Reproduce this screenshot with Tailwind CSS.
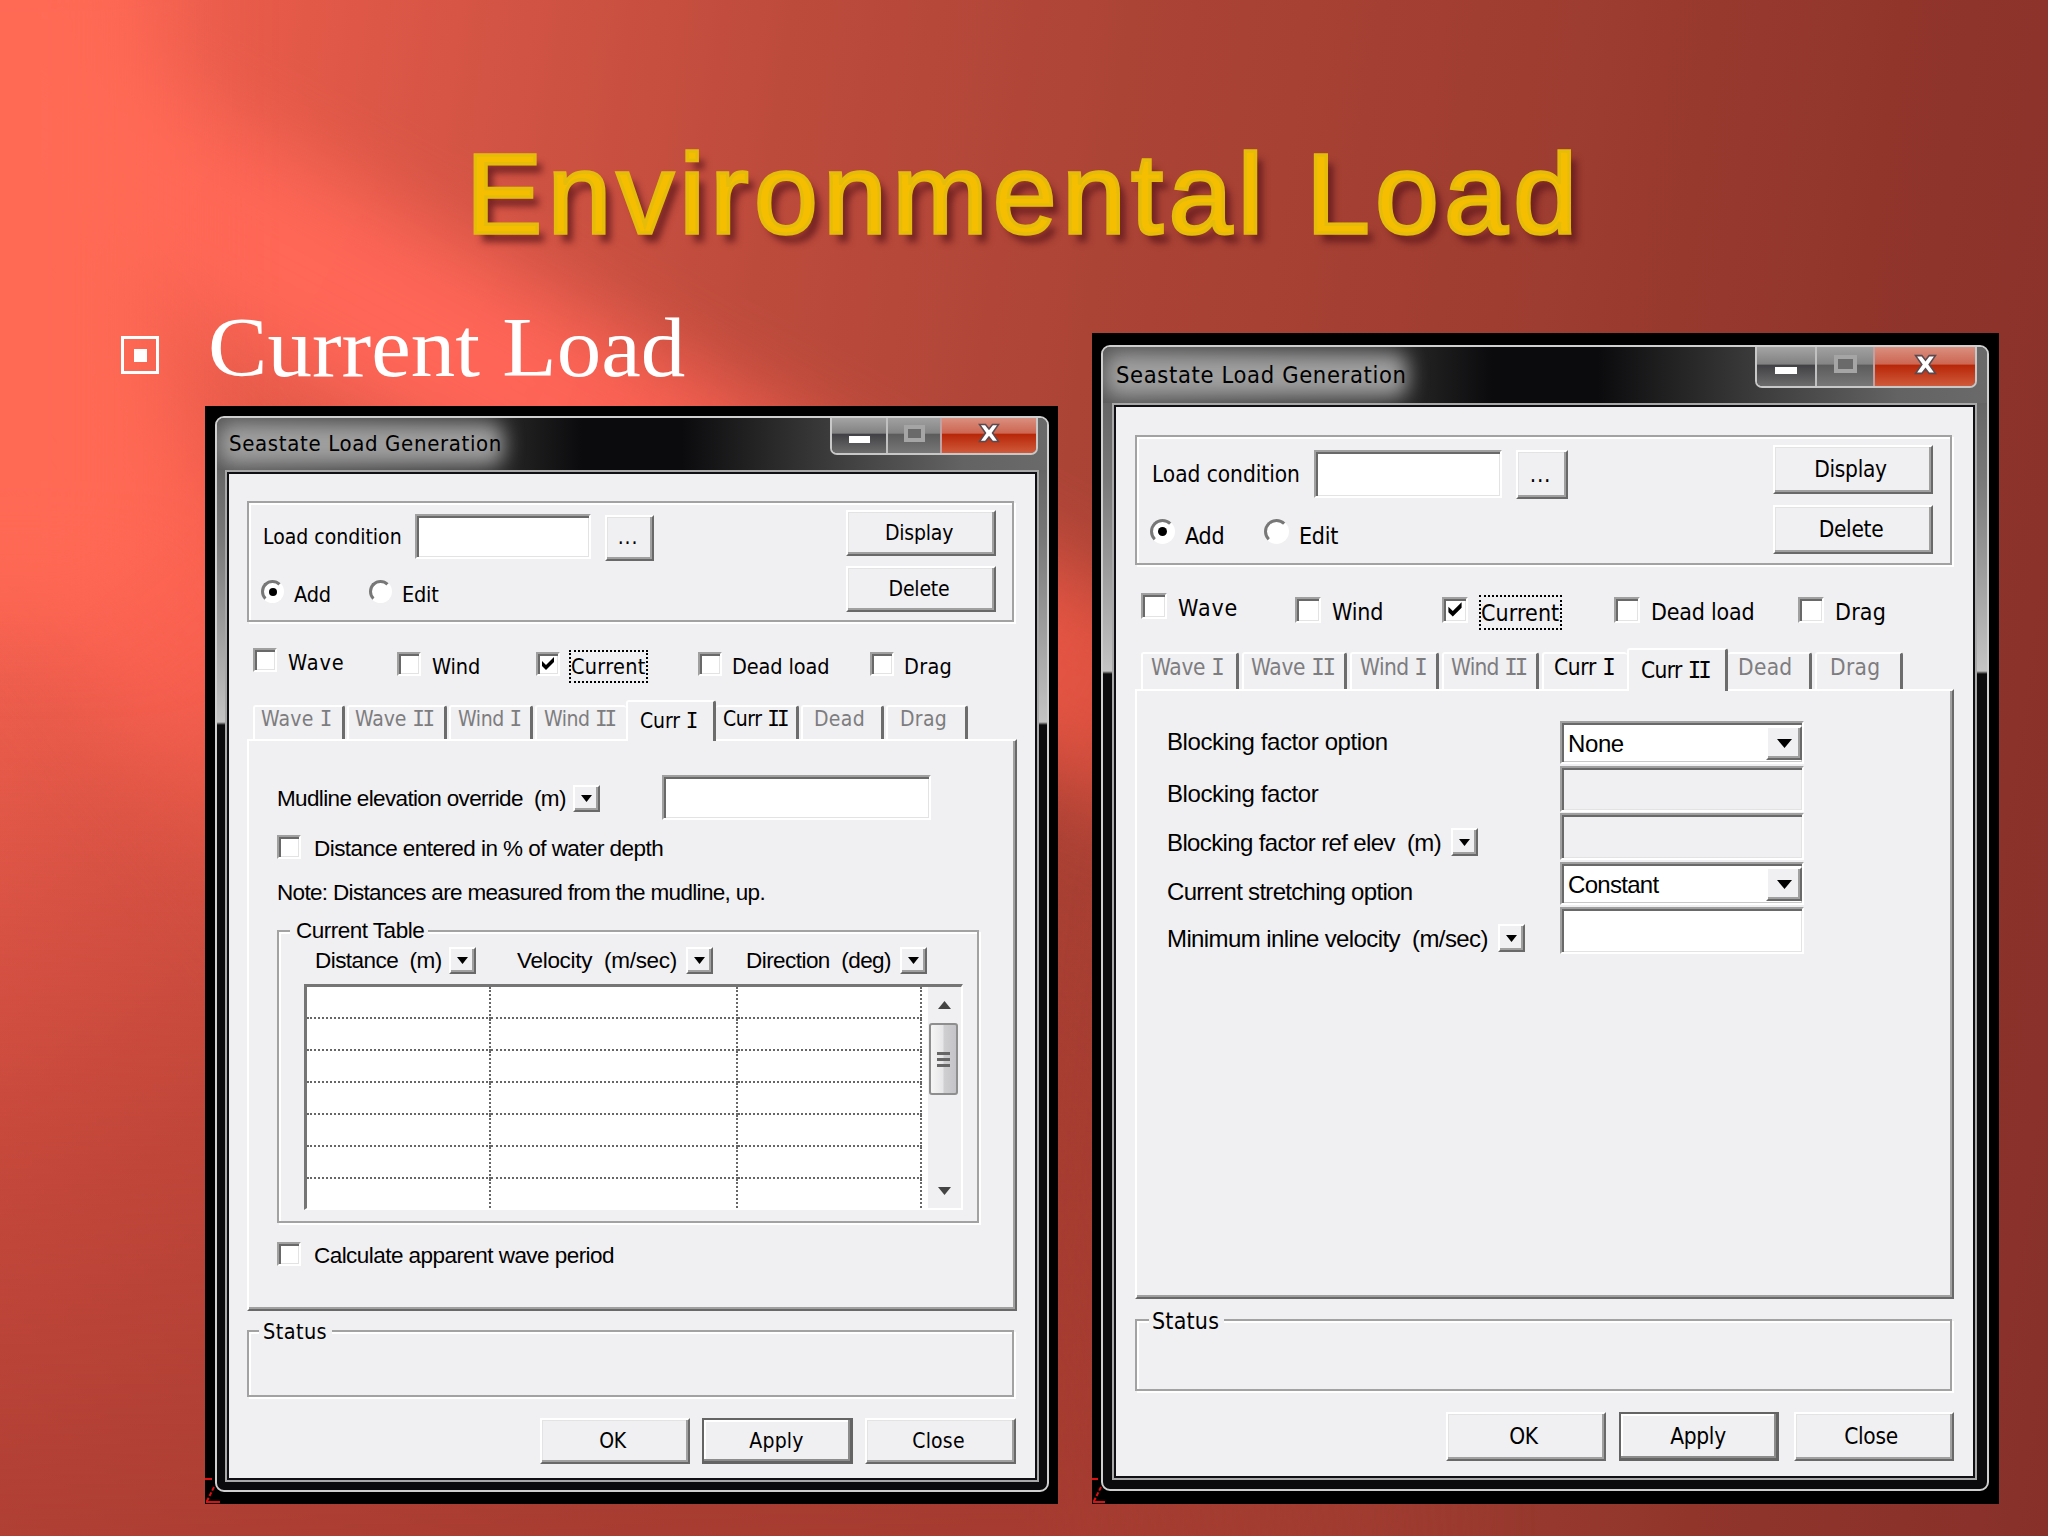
<!DOCTYPE html>
<html lang="en">
<head>
    <meta charset="UTF-8">
    <meta name="viewport" content="width=device-width, initial-scale=1.0">
    <title>Environmental Load</title>
    <script src="https://cdn.jsdelivr.net/npm/@tailwindcss/browser@4"></script>
</head>
<body class="relative w-[2048px] h-[1536px] overflow-hidden bg-[#a03a30] font-['DejaVu_Sans_Condensed','DejaVu_Sans',sans-serif] text-black whitespace-nowrap">

    <!-- Background rays -->
    <div class="absolute inset-0 bg-[linear-gradient(98deg,#f96452_0%,#e65a49_12%,#d35444_22%,#bd4b3c_35%,#ac4436_50%,#9f3d31_68%,#91352b_84%,#87302a_100%)]"></div>
    <div class="absolute inset-0 bg-[linear-gradient(to_bottom,transparent_40%,rgba(165,55,46,0.55)_75%,rgba(165,58,48,0.85)_100%)] [mask-image:linear-gradient(to_right,#000_50%,transparent_75%)]"></div>
    <div class="absolute -left-[250px] top-[335px] w-[1700px] h-[190px] rotate-[28deg] blur-[40px] bg-[linear-gradient(to_right,#ff6a55_0%,#ff6557_45%,rgba(230,84,66,0.95)_82%,transparent_100%)]"></div>
    <div class="absolute -left-[330px] top-[480px] w-[1000px] h-[240px] rotate-[52deg] blur-[50px] bg-[linear-gradient(to_right,#ff6a55_0%,#fb6150_55%,rgba(215,80,64,0.6)_80%,transparent_100%)]"></div>
    <div class="absolute -left-[200px] -top-[100px] w-[360px] h-[700px] blur-[50px] bg-[#ff6a55]/90"></div>

    <!-- Slide heading -->
    <h1 class="absolute left-[466px] top-[127px] font-['Liberation_Sans',sans-serif] font-normal text-[114px] leading-[133px] tracking-[5.7px] text-[#f6be00] [-webkit-text-stroke:3.5px_#e6bc0a] [text-shadow:-1px_-1px_1px_#a9a41c,1px_1px_1px_#b8a00c,7px_9px_7px_rgba(90,20,25,0.75)]">Environmental Load</h1>
    <div class="absolute left-[121px] top-[300px] flex">
        <div class="mt-[36px] w-[38px] h-[38px] border-[3px] border-white flex items-center justify-center">
            <div class="w-[13px] h-[13px] bg-white"></div>
        </div>
        <h2 class="ml-[49px] origin-left scale-x-[1.06] font-['Liberation_Serif',serif] text-[84px] leading-[96px] text-white">Current Load</h2>
    </div>

    <!-- Left window: Curr I -->
    <div class="absolute left-[205px] top-[406px] w-[853px] h-[1098px] bg-black pl-[10px] pt-[10px]">
        <svg class="absolute left-0 bottom-0 w-[16px] h-[28px]" viewBox="0 0 16 28" fill="none" stroke="#e01010" stroke-width="2"><path d="M0 3h7M1 26h14"/><path d="M9 11L1 27" stroke-dasharray="4 2"/></svg>
        <div class="relative w-[834px] h-[1076px] rounded-[9px] border-2 border-[#cfcfcf] overflow-hidden bg-[linear-gradient(to_bottom,#4c4c4c_0px,#666_55px,#777_120px,#c4c4c4_304px,#0b0b0d_307px)]">
            <div class="relative h-[52px] overflow-hidden bg-[linear-gradient(to_right,#555_0%,#333_30%,#0b0b0d_44%,#0b0b0d_56%,#3c3c3c_74%,#636363_90%,#6a6a6a_100%)]">
                <div class="absolute left-[2px] top-[5px] w-[284px] h-[42px] rounded-[12px] bg-[#a0a0a0] blur-[10px]"></div>
                <p class="relative pl-[12px] pt-[14px] text-[22px] leading-[24px] tracking-[0.65px]">Seastate Load Generation</p>
                <div class="absolute right-[9px] -top-[2px] w-[208px] h-[39px] flex rounded-b-[7px] border-2 border-t-0 border-[#c8c8c8] overflow-hidden">
                    <div class="w-[56px] flex items-center justify-center border-r-2 border-[#c0c0c0] bg-[linear-gradient(to_bottom,#a8a8a8_0%,#828282_46%,#424246_50%,#6c6c6c_100%)]"><div class="mt-[9px] w-[21px] h-[7px] bg-white"></div></div>
                    <div class="w-[54px] flex items-center justify-center border-r-2 border-[#c0a0a0] bg-[linear-gradient(to_bottom,#a4a4a4_0%,#858585_46%,#5c5c5c_50%,#777_100%)]"><div class="w-[21px] h-[17px] -mt-[3px] border-4 border-[#a5a5a5] bg-[#6a6a6a]"></div></div>
                    <div class="flex-1 flex items-center justify-center bg-[linear-gradient(to_bottom,#dc9484_0%,#cc6753_46%,#b82708_50%,#cf5a3c_100%)]">
                        <svg class="w-[22px] h-[20px] -mt-[3px]" viewBox="0 0 22 20"><path d="M1.500 1.500h6L11 6l3.500-4.500h6L14.500 10l6 8.500h-6L11 14l-3.500 4.500h-6l6-8.500z" fill="#fff" stroke="#5a4a50" stroke-width="1.500"/></svg>
                    </div>
                </div>
            </div>
            <div class="ml-[8px] w-[814px] h-[1012px] border-2 border-[#a8a8a8]">
                <div class="h-full border-2 border-[#101014] bg-[#f0eff1]">

                    <!-- Load condition -->
                    <div class="ml-[18px] mt-[27px] w-[767px] h-[121px] border-2 border-[#a2a2a2] shadow-[inset_2px_2px_0_#fff,2px_2px_0_#fff] flex justify-between">
                        <div>
                            <div class="flex items-start h-[70px] pl-[14px]">
                                <p class="w-[152px] mt-[22px] text-[21px] leading-[24px]">Load condition</p>
                                <div class="mt-[11px] w-[176px] h-[45px] bg-white border-2 border-t-[#a0a0a0] border-l-[#a0a0a0] border-r-[#fff] border-b-[#fff] shadow-[inset_2px_2px_0_#696969,inset_-1px_-1px_0_#e3e3e3]"></div>
                                <button class="ml-[14px] mt-[12px] w-[49px] h-[46px] pr-[3px] border-2 border-t-white border-l-white border-r-[#696969] border-b-[#696969] shadow-[inset_-2px_-2px_0_#a0a0a0,inset_1px_1px_0_#e3e3e3] text-[21px] tracking-[0.8px]">...</button>
                            </div>
                            <div class="flex items-start pl-[12px] text-[21.5px] leading-[24px] tracking-[-0.2px]">
                                <div class="mt-[7px] w-[23px] h-[23px] rounded-full bg-white border-[3px] border-t-[#777] border-l-[#777] border-r-[#fff] border-b-[#fff] flex items-center justify-center"><div class="w-[8px] h-[8px] rounded-full bg-black"></div></div>
                                <p class="w-[75px] ml-[10px] mt-[10px]">Add</p>
                                <div class="mt-[7px] w-[23px] h-[23px] rounded-full bg-white border-[3px] border-t-[#777] border-l-[#777] border-r-[#fff] border-b-[#fff]"></div>
                                <p class="ml-[10px] mt-[10px]">Edit</p>
                            </div>
                        </div>
                        <div class="mt-[7px] mr-[16px] flex flex-col gap-[10px] text-[21px] leading-[24px] tracking-[-0.2px]">
                            <button class="w-[150px] h-[46px] pb-[1px] pr-[4px] border-2 border-t-white border-l-white border-r-[#696969] border-b-[#696969] shadow-[inset_-2px_-2px_0_#a0a0a0,inset_1px_1px_0_#e3e3e3]">Display</button>
                            <button class="w-[150px] h-[46px] pb-[1px] pr-[4px] border-2 border-t-white border-l-white border-r-[#696969] border-b-[#696969] shadow-[inset_-2px_-2px_0_#a0a0a0,inset_1px_1px_0_#e3e3e3]">Delete</button>
                        </div>
                    </div>

                    <!-- Load types -->
                    <div class="h-[78px] pl-[24px] grid grid-cols-[144px_139px_162px_172px_auto] items-start text-[21.5px] leading-[24px] tracking-[-0.1px]">
                        <div class="flex items-start"><div class="mt-[26px] w-[24px] h-[24px] bg-white border-2 border-t-[#a0a0a0] border-l-[#a0a0a0] border-r-[#fff] border-b-[#fff] shadow-[inset_2px_2px_0_#696969,inset_-1px_-1px_0_#e3e3e3]"></div><p class="ml-[11px] mt-[29px] tracking-[0.9px]">Wave</p></div>
                        <div class="flex items-start"><div class="mt-[30px] w-[24px] h-[24px] bg-white border-2 border-t-[#a0a0a0] border-l-[#a0a0a0] border-r-[#fff] border-b-[#fff] shadow-[inset_2px_2px_0_#696969,inset_-1px_-1px_0_#e3e3e3]"></div><p class="ml-[11px] mt-[33px]">Wind</p></div>
                        <div class="flex items-start">
                            <div class="mt-[30px] w-[24px] h-[24px] bg-white border-2 border-t-[#a0a0a0] border-l-[#a0a0a0] border-r-[#fff] border-b-[#fff] shadow-[inset_2px_2px_0_#696969,inset_-1px_-1px_0_#e3e3e3]"><svg class="w-[20px] h-[20px]" viewBox="0 0 20 20"><path d="M4 7v5l4 4 8-8V3l-8 8z" fill="#000"/></svg></div>
                            <p class="ml-[9px] mt-[28px] w-[79px] h-[33px] border-2 border-dotted border-black pt-[3px] tracking-[0.3px]">Current</p>
                        </div>
                        <div class="flex items-start"><div class="mt-[30px] w-[24px] h-[24px] bg-white border-2 border-t-[#a0a0a0] border-l-[#a0a0a0] border-r-[#fff] border-b-[#fff] shadow-[inset_2px_2px_0_#696969,inset_-1px_-1px_0_#e3e3e3]"></div><p class="ml-[10px] mt-[33px]">Dead load</p></div>
                        <div class="flex items-start"><div class="mt-[30px] w-[24px] h-[24px] bg-white border-2 border-t-[#a0a0a0] border-l-[#a0a0a0] border-r-[#fff] border-b-[#fff] shadow-[inset_2px_2px_0_#696969,inset_-1px_-1px_0_#e3e3e3]"></div><p class="ml-[10px] mt-[33px] tracking-[0.3px]">Drag</p></div>
                    </div>

                    <!-- Tabs -->
                    <div class="flex items-end h-[39px] pl-[24px] text-[21px] leading-[24px] tracking-[-0.1px] text-[#7d7d80]">
                        <div class="w-[92px] h-[34px] mr-[2px] pl-[6px] rounded-t-[3px] border-t-2 border-l-2 border-r-[3px] border-t-white border-l-white border-r-[#6c6c6c] tracking-[0.2px]">Wave <span class="font-['DejaVu_Sans_Mono']">I</span></div>
                        <div class="w-[100px] h-[34px] mr-[2px] pl-[6px] rounded-t-[3px] border-t-2 border-l-2 border-r-[3px] border-t-white border-l-white border-r-[#6c6c6c]">Wave <span class="font-['DejaVu_Sans_Mono'] tracking-[-2.5px]">II</span></div>
                        <div class="w-[84px] h-[34px] mr-[2px] pl-[7px] rounded-t-[3px] border-t-2 border-l-2 border-r-[3px] border-t-white border-l-white border-r-[#6c6c6c] tracking-[-0.4px]">Wind <span class="font-['DejaVu_Sans_Mono']">I</span></div>
                        <div class="w-[91px] h-[34px] pl-[7px] rounded-t-[3px] border-t-2 border-l-2 border-t-white border-l-white tracking-[-0.5px]">Wind <span class="font-['DejaVu_Sans_Mono'] tracking-[-3px]">II</span></div>
                        <div class="relative z-10 w-[90px] h-[41px] -mb-[2px] pl-[12px] pt-[7px] rounded-t-[3px] border-t-2 border-l-2 border-r-[3px] border-t-white border-l-white border-r-[#6c6c6c] bg-[#f0eff1] text-black">Curr <span class="font-['DejaVu_Sans_Mono']">I</span></div>
                        <div class="w-[83px] h-[34px] mr-[2px] pl-[7px] rounded-t-[3px] border-t-2 border-r-[3px] border-t-white border-r-[#6c6c6c] text-black tracking-[-0.4px]">Curr <span class="font-['DejaVu_Sans_Mono'] tracking-[-3px]">II</span></div>
                        <div class="w-[83px] h-[34px] mr-[2px] pl-[11px] rounded-t-[3px] border-t-2 border-l-2 border-r-[3px] border-t-white border-l-white border-r-[#6c6c6c] tracking-[0.3px]">Dead</div>
                        <div class="w-[82px] h-[34px] pl-[12px] rounded-t-[3px] border-t-2 border-l-2 border-r-[3px] border-t-white border-l-white border-r-[#6c6c6c] tracking-[0.3px]">Drag</div>
                    </div>
                    <div class="ml-[18px] w-[770px] h-[572px] border-2 border-t-white border-l-white border-r-[#696969] border-b-[#696969] shadow-[inset_-2px_-2px_0_#a0a0a0] font-['Liberation_Sans',sans-serif] text-[22.5px] leading-[24px] tracking-[-0.55px]">
                        <div class="flex items-start h-[84px] pl-[28px]">
                            <p class="w-[296px] mt-[46px] tracking-[-0.65px]">Mudline elevation override&nbsp; (m)</p>
                            <button class="mt-[44px] w-[27px] h-[27px] border-2 border-t-white border-l-white border-r-[#696969] border-b-[#696969] shadow-[inset_-2px_-2px_0_#a0a0a0] flex items-center justify-center"><svg class="w-[11px] h-[7px]" viewBox="0 0 11 7"><path d="M0 0h11L5.500 7z"/></svg></button>
                            <div class="ml-[62px] mt-[34px] w-[269px] h-[45px] bg-white border-2 border-t-[#a0a0a0] border-l-[#a0a0a0] border-r-[#fff] border-b-[#fff] shadow-[inset_2px_2px_0_#696969,inset_-1px_-1px_0_#e3e3e3]"></div>
                        </div>
                        <div class="flex items-start h-[45px] pl-[28px]">
                            <div class="mt-[10px] w-[24px] h-[24px] bg-white border-2 border-t-[#a0a0a0] border-l-[#a0a0a0] border-r-[#fff] border-b-[#fff] shadow-[inset_2px_2px_0_#696969,inset_-1px_-1px_0_#e3e3e3]"></div>
                            <p class="ml-[13px] mt-[12px]">Distance entered in % of water depth</p>
                        </div>
                        <p class="mt-[11px] pl-[28px] tracking-[-0.67px]">Note: Distances are measured from the mudline, up.</p>
                        <div class="mt-[25px] ml-[28px] w-[702px] h-[293px] border-2 border-[#a2a2a2] shadow-[inset_2px_2px_0_#fff,2px_2px_0_#fff]">
                            <p class="-mt-[13px] ml-[11px] mb-[1px] w-[138px] pl-[6px] bg-[#f0eff1] tracking-[-0.5px]">Current Table</p>
                            <div class="flex items-start h-[40px] pl-[36px]">
                                <p class="w-[134px] mt-[5px]">Distance&nbsp; (m)</p>
                                <button class="mt-[3px] w-[27px] h-[27px] border-2 border-t-white border-l-white border-r-[#696969] border-b-[#696969] shadow-[inset_-2px_-2px_0_#a0a0a0] flex items-center justify-center"><svg class="w-[11px] h-[7px]" viewBox="0 0 11 7"><path d="M0 0h11L5.500 7z"/></svg></button>
                                <p class="w-[169px] ml-[41px] mt-[5px] tracking-[-0.3px]">Velocity&nbsp; (m/sec)</p>
                                <button class="mt-[3px] w-[27px] h-[27px] border-2 border-t-white border-l-white border-r-[#696969] border-b-[#696969] shadow-[inset_-2px_-2px_0_#a0a0a0] flex items-center justify-center"><svg class="w-[11px] h-[7px]" viewBox="0 0 11 7"><path d="M0 0h11L5.500 7z"/></svg></button>
                                <p class="w-[154px] ml-[33px] mt-[5px]">Direction&nbsp; (deg)</p>
                                <button class="mt-[3px] w-[27px] h-[27px] border-2 border-t-white border-l-white border-r-[#696969] border-b-[#696969] shadow-[inset_-2px_-2px_0_#a0a0a0] flex items-center justify-center"><svg class="w-[11px] h-[7px]" viewBox="0 0 11 7"><path d="M0 0h11L5.500 7z"/></svg></button>
                            </div>
                            <div class="ml-[25px] w-[659px] h-[226px] flex bg-white border-t-[3px] border-l-[3px] border-r-2 border-b-2 border-t-[#757575] border-l-[#757575] border-r-white border-b-white overflow-hidden">
                                <div id="rows" class="w-[615px] overflow-hidden"></div>
                                <div class="ml-[6px] flex-1 bg-[#f0eff1] flex flex-col items-center justify-between pt-[14px] pb-[13px]">
                                    <svg class="w-[13px] h-[8px]" viewBox="0 0 13 8"><path d="M0 8h13L6.500 0z" fill="#444"/></svg>
                                    <div class="-mt-[78px] -ml-[3px] w-[29px] h-[72px] rounded-[3px] border-2 border-[#8e8e8e] bg-[linear-gradient(to_right,#f5f5f5_0%,#e6e6e8_48%,#cfcfd2_52%,#c4c4c8_100%)] flex flex-col items-center justify-center gap-[3px]">
                                        <div class="w-[13px] h-[3px] bg-[#666]"></div>
                                        <div class="w-[13px] h-[3px] bg-[#666]"></div>
                                        <div class="w-[13px] h-[3px] bg-[#666]"></div>
                                    </div>
                                    <svg class="w-[13px] h-[8px]" viewBox="0 0 13 8"><path d="M0 0h13L6.500 8z" fill="#444"/></svg>
                                </div>
                            </div>
                        </div>
                        <div class="flex items-start pl-[28px]">
                            <div class="mt-[19px] w-[24px] h-[24px] bg-white border-2 border-t-[#a0a0a0] border-l-[#a0a0a0] border-r-[#fff] border-b-[#fff] shadow-[inset_2px_2px_0_#696969,inset_-1px_-1px_0_#e3e3e3]"></div>
                            <p class="ml-[13px] mt-[21px]">Calculate apparent wave period</p>
                        </div>
                    </div>

                    <!-- Status -->
                    <div class="ml-[18px] mt-[19px] w-[767px] h-[67px] border-2 border-[#a2a2a2] shadow-[inset_2px_2px_0_#fff,2px_2px_0_#fff]">
                        <p class="-mt-[12px] ml-[10px] w-[73px] pl-[4px] bg-[#f0eff1] text-[21.5px] leading-[24px] tracking-[0.4px]">Status</p>
                    </div>
                    <div class="mt-[21px] pl-[311px] flex gap-[12px] text-[21px] leading-[24px] tracking-[-0.3px]">
                        <button class="w-[150px] h-[46px] pb-px pr-[5px] border-2 border-t-white border-l-white border-r-[#696969] border-b-[#696969] shadow-[inset_-2px_-2px_0_#a0a0a0,inset_1px_1px_0_#e3e3e3]">OK</button>
                        <button class="w-[151px] h-[46px] pr-px border-2 border-b-[3px] border-r-[3px] border-[#646464] shadow-[inset_-2px_-2px_0_#8c8c8c,inset_2px_2px_0_#fff] tracking-[0.2px]">Apply</button>
                        <button class="w-[151px] h-[46px] pb-px pr-[4px] border-2 border-t-white border-l-white border-r-[#696969] border-b-[#696969] shadow-[inset_-2px_-2px_0_#a0a0a0,inset_1px_1px_0_#e3e3e3] tracking-[0.2px]">Close</button>
                    </div>
                </div>
            </div>
        </div>
    </div>

    <!-- Right window: Curr II -->
    <div class="absolute left-[1092px] top-[333px] w-[907px] h-[1171px] bg-black pl-[9px] pt-[12px]">
        <svg class="absolute left-0 bottom-0 w-[16px] h-[28px]" viewBox="0 0 16 28" fill="none" stroke="#e01010" stroke-width="2"><path d="M0 3h6M1 26h12"/><path d="M9 11L1 27" stroke-dasharray="4 2"/></svg>
        <div class="relative w-[888px] h-[1146px] rounded-[9px] border-2 border-[#cfcfcf] overflow-hidden bg-[linear-gradient(to_bottom,#4c4c4c_0px,#666_58px,#777_130px,#c4c4c4_324px,#0b0b0d_327px)]">
            <div class="relative h-[56px] overflow-hidden bg-[linear-gradient(to_right,#555_0%,#333_30%,#0b0b0d_44%,#0b0b0d_56%,#3c3c3c_74%,#636363_90%,#6a6a6a_100%)]">
                <div class="absolute left-[2px] top-[6px] w-[302px] h-[44px] rounded-[12px] bg-[#a0a0a0] blur-[10px]"></div>
                <p class="relative pl-[13px] pt-[15px] text-[23.5px] leading-[26px] tracking-[0.65px]">Seastate Load Generation</p>
                <div class="absolute right-[10px] -top-[2px] w-[222px] h-[43px] flex rounded-b-[7px] border-2 border-t-0 border-[#c8c8c8] overflow-hidden">
                    <div class="w-[60px] flex items-center justify-center border-r-2 border-[#c0c0c0] bg-[linear-gradient(to_bottom,#a8a8a8_0%,#828282_46%,#424246_50%,#6c6c6c_100%)]"><div class="mt-[9px] w-[22px] h-[7px] bg-white"></div></div>
                    <div class="w-[58px] flex items-center justify-center border-r-2 border-[#c0a0a0] bg-[linear-gradient(to_bottom,#a4a4a4_0%,#858585_46%,#5c5c5c_50%,#777_100%)]"><div class="w-[23px] h-[18px] -mt-[3px] border-4 border-[#a5a5a5] bg-[#6a6a6a]"></div></div>
                    <div class="flex-1 flex items-center justify-center bg-[linear-gradient(to_bottom,#dc9484_0%,#cc6753_46%,#b82708_50%,#cf5a3c_100%)]">
                        <svg class="w-[23px] h-[21px] -mt-[3px]" viewBox="0 0 22 20"><path d="M1.500 1.500h6L11 6l3.500-4.500h6L14.500 10l6 8.500h-6L11 14l-3.500 4.500h-6l6-8.500z" fill="#fff" stroke="#5a4a50" stroke-width="1.500"/></svg>
                    </div>
                </div>
            </div>
            <div class="ml-[9px] w-[865px] h-[1077px] border-2 border-[#a8a8a8]">
                <div class="h-full border-2 border-[#101014] bg-[#f0eff1]">

                    <!-- Load condition -->
                    <div class="ml-[19px] mt-[28px] w-[817px] h-[130px] border-2 border-[#a2a2a2] shadow-[inset_2px_2px_0_#fff,2px_2px_0_#fff] flex justify-between">
                        <div>
                            <div class="flex items-start h-[72px] pl-[15px]">
                                <p class="w-[162px] mt-[24px] text-[22.5px] leading-[26px] tracking-[-0.05px]">Load condition</p>
                                <div class="mt-[13px] w-[188px] h-[48px] bg-white border-2 border-t-[#a0a0a0] border-l-[#a0a0a0] border-r-[#fff] border-b-[#fff] shadow-[inset_2px_2px_0_#696969,inset_-1px_-1px_0_#e3e3e3]"></div>
                                <button class="ml-[14px] mt-[13px] w-[52px] h-[49px] pr-[3px] border-2 border-t-white border-l-white border-r-[#696969] border-b-[#696969] shadow-[inset_-2px_-2px_0_#a0a0a0,inset_1px_1px_0_#e3e3e3] text-[22.5px] tracking-[0.8px]">...</button>
                            </div>
                            <div class="flex items-start pl-[13px] text-[23px] leading-[26px] tracking-[-0.2px]">
                                <div class="mt-[10px] w-[25px] h-[25px] rounded-full bg-white border-[3px] border-t-[#777] border-l-[#777] border-r-[#fff] border-b-[#fff] flex items-center justify-center"><div class="w-[9px] h-[9px] rounded-full bg-black"></div></div>
                                <p class="w-[79px] ml-[10px] mt-[14px]">Add</p>
                                <div class="mt-[10px] w-[25px] h-[25px] rounded-full bg-white border-[3px] border-t-[#777] border-l-[#777] border-r-[#fff] border-b-[#fff]"></div>
                                <p class="ml-[10px] mt-[14px]">Edit</p>
                            </div>
                        </div>
                        <div class="mt-[8px] mr-[17px] flex flex-col gap-[11px] text-[22.5px] leading-[26px] tracking-[-0.3px]">
                            <button class="w-[160px] h-[49px] pb-px pr-[5px] border-2 border-t-white border-l-white border-r-[#696969] border-b-[#696969] shadow-[inset_-2px_-2px_0_#a0a0a0,inset_1px_1px_0_#e3e3e3]">Display</button>
                            <button class="w-[160px] h-[49px] pb-px pr-[4px] border-2 border-t-white border-l-white border-r-[#696969] border-b-[#696969] shadow-[inset_-2px_-2px_0_#a0a0a0,inset_1px_1px_0_#e3e3e3]">Delete</button>
                        </div>
                    </div>

                    <!-- Load types -->
                    <div class="h-[83px] pl-[25px] grid grid-cols-[154px_147px_172px_184px_auto] items-start text-[23px] leading-[26px] tracking-[-0.2px]">
                        <div class="flex items-start"><div class="mt-[28px] w-[26px] h-[26px] bg-white border-2 border-t-[#a0a0a0] border-l-[#a0a0a0] border-r-[#fff] border-b-[#fff] shadow-[inset_2px_2px_0_#696969,inset_-1px_-1px_0_#e3e3e3]"></div><p class="ml-[11px] mt-[30px] tracking-[0.9px]">Wave</p></div>
                        <div class="flex items-start"><div class="mt-[32px] w-[26px] h-[26px] bg-white border-2 border-t-[#a0a0a0] border-l-[#a0a0a0] border-r-[#fff] border-b-[#fff] shadow-[inset_2px_2px_0_#696969,inset_-1px_-1px_0_#e3e3e3]"></div><p class="ml-[11px] mt-[34px]">Wind</p></div>
                        <div class="flex items-start">
                            <div class="mt-[32px] w-[26px] h-[26px] bg-white border-2 border-t-[#a0a0a0] border-l-[#a0a0a0] border-r-[#fff] border-b-[#fff] shadow-[inset_2px_2px_0_#696969,inset_-1px_-1px_0_#e3e3e3]"><svg class="w-[22px] h-[22px]" viewBox="0 0 20 20"><path d="M4 7v5l4 4 8-8V3l-8 8z" fill="#000"/></svg></div>
                            <p class="ml-[11px] mt-[30px] w-[83px] h-[35px] border-2 border-dotted border-black pt-[3px] tracking-[0.1px]">Current</p>
                        </div>
                        <div class="flex items-start"><div class="mt-[32px] w-[26px] h-[26px] bg-white border-2 border-t-[#a0a0a0] border-l-[#a0a0a0] border-r-[#fff] border-b-[#fff] shadow-[inset_2px_2px_0_#696969,inset_-1px_-1px_0_#e3e3e3]"></div><p class="ml-[11px] mt-[34px]">Dead load</p></div>
                        <div class="flex items-start"><div class="mt-[32px] w-[26px] h-[26px] bg-white border-2 border-t-[#a0a0a0] border-l-[#a0a0a0] border-r-[#fff] border-b-[#fff] shadow-[inset_2px_2px_0_#696969,inset_-1px_-1px_0_#e3e3e3]"></div><p class="ml-[11px] mt-[34px] tracking-[0.2px]">Drag</p></div>
                    </div>

                    <!-- Tabs -->
                    <div class="flex items-end h-[41px] pl-[25px] text-[22.5px] leading-[26px] tracking-[-0.3px] text-[#7d7d80]">
                        <div class="w-[98px] h-[37px] mr-[3px] pl-[8px] rounded-t-[3px] border-t-2 border-l-2 border-r-[3px] border-t-white border-l-white border-r-[#6c6c6c]">Wave <span class="font-['DejaVu_Sans_Mono']">I</span></div>
                        <div class="w-[105px] h-[37px] mr-[3px] pl-[7px] rounded-t-[3px] border-t-2 border-l-2 border-r-[3px] border-t-white border-l-white border-r-[#6c6c6c]">Wave <span class="font-['DejaVu_Sans_Mono'] tracking-[-2.5px]">II</span></div>
                        <div class="w-[89px] h-[37px] mr-[3px] pl-[8px] rounded-t-[3px] border-t-2 border-l-2 border-r-[3px] border-t-white border-l-white border-r-[#6c6c6c] tracking-[-0.6px]">Wind <span class="font-['DejaVu_Sans_Mono']">I</span></div>
                        <div class="w-[97px] h-[37px] mr-[3px] pl-[7px] rounded-t-[3px] border-t-2 border-l-2 border-r-[3px] border-t-white border-l-white border-r-[#6c6c6c] tracking-[-0.8px]">Wind <span class="font-['DejaVu_Sans_Mono'] tracking-[-3px]">II</span></div>
                        <div class="w-[85px] h-[37px] pl-[10px] rounded-t-[3px] border-t-2 border-l-2 border-t-white border-l-white text-black">Curr <span class="font-['DejaVu_Sans_Mono']">I</span></div>
                        <div class="relative z-10 w-[101px] h-[43px] -mb-[2px] pl-[12px] pt-[7px] rounded-t-[3px] border-t-2 border-l-2 border-r-[3px] border-t-white border-l-white border-r-[#6c6c6c] bg-[#f0eff1] text-black tracking-[-0.6px]">Curr <span class="font-['DejaVu_Sans_Mono'] tracking-[-3px]">II</span></div>
                        <div class="w-[84px] h-[37px] mr-[3px] pl-[10px] rounded-t-[3px] border-t-2 border-r-[3px] border-t-white border-r-[#6c6c6c] tracking-[0.3px]">Dead</div>
                        <div class="w-[88px] h-[37px] pl-[13px] rounded-t-[3px] border-t-2 border-l-2 border-r-[3px] border-t-white border-l-white border-r-[#6c6c6c] tracking-[0.3px]">Drag</div>
                    </div>
                    <div class="ml-[19px] w-[819px] h-[610px] flex border-2 border-t-white border-l-white border-r-[#696969] border-b-[#696969] shadow-[inset_-2px_-2px_0_#a0a0a0] font-['Liberation_Sans',sans-serif] text-[24px] leading-[26px] tracking-[-0.4px]">
                        <div class="w-[423px] pl-[30px] pt-[38px]">
                            <p class="h-[52px]">Blocking factor option</p>
                            <p class="h-[49px]">Blocking factor</p>
                            <div class="h-[49px] flex items-start">
                                <p class="w-[284px] tracking-[-0.62px]">Blocking factor ref elev&nbsp; (m)</p>
                                <button class="-mt-[2px] w-[27px] h-[28px] border-2 border-t-white border-l-white border-r-[#696969] border-b-[#696969] shadow-[inset_-2px_-2px_0_#a0a0a0] flex items-center justify-center"><svg class="w-[11px] h-[7px]" viewBox="0 0 11 7"><path d="M0 0h11L5.500 7z"/></svg></button>
                            </div>
                            <p class="h-[47px] tracking-[-0.7px]">Current stretching option</p>
                            <div class="flex items-start">
                                <p class="w-[331px] tracking-[-0.6px]">Minimum inline velocity&nbsp; (m/sec)</p>
                                <button class="-mt-[2px] w-[27px] h-[28px] border-2 border-t-white border-l-white border-r-[#696969] border-b-[#696969] shadow-[inset_-2px_-2px_0_#a0a0a0] flex items-center justify-center"><svg class="w-[11px] h-[7px]" viewBox="0 0 11 7"><path d="M0 0h11L5.500 7z"/></svg></button>
                            </div>
                        </div>
                        <div class="w-[244px] pt-[30px]">
                            <div class="h-[43px] flex justify-between bg-white border-2 border-t-[#a0a0a0] border-l-[#a0a0a0] border-r-[#fff] border-b-[#fff] shadow-[inset_2px_2px_0_#696969,inset_-1px_-1px_0_#c8c8c8]">
                                <p class="pl-[6px] pt-[8px]">None</p>
                                <button class="mt-[3px] w-[36px] h-[34px] bg-[#f0eff1] border-2 border-t-white border-l-white border-r-[#696969] border-b-[#696969] shadow-[inset_-2px_-2px_0_#a0a0a0] flex items-center justify-center"><svg class="w-[15px] h-[9px]" viewBox="0 0 15 9"><path d="M0 0h15L7.500 9z"/></svg></button>
                            </div>
                            <div class="mt-[2px] h-[46px] border-2 border-t-[#a0a0a0] border-l-[#a0a0a0] border-r-[#fff] border-b-[#fff] shadow-[inset_2px_2px_0_#696969,inset_-1px_-1px_0_#e3e3e3]"></div>
                            <div class="mt-[1px] h-[47px] border-2 border-t-[#a0a0a0] border-l-[#a0a0a0] border-r-[#fff] border-b-[#fff] shadow-[inset_2px_2px_0_#696969,inset_-1px_-1px_0_#e3e3e3]"></div>
                            <div class="mt-[2px] h-[43px] flex justify-between bg-white border-2 border-t-[#a0a0a0] border-l-[#a0a0a0] border-r-[#fff] border-b-[#fff] shadow-[inset_2px_2px_0_#696969,inset_-1px_-1px_0_#c8c8c8]">
                                <p class="pl-[6px] pt-[8px] tracking-[-0.7px]">Constant</p>
                                <button class="mt-[3px] w-[36px] h-[34px] bg-[#f0eff1] border-2 border-t-white border-l-white border-r-[#696969] border-b-[#696969] shadow-[inset_-2px_-2px_0_#a0a0a0] flex items-center justify-center"><svg class="w-[15px] h-[9px]" viewBox="0 0 15 9"><path d="M0 0h15L7.500 9z"/></svg></button>
                            </div>
                            <div class="mt-[2px] h-[47px] bg-white border-2 border-t-[#a0a0a0] border-l-[#a0a0a0] border-r-[#fff] border-b-[#fff] shadow-[inset_2px_2px_0_#696969,inset_-1px_-1px_0_#e3e3e3]"></div>
                        </div>
                    </div>

                    <!-- Status -->
                    <div class="ml-[19px] mt-[20px] w-[817px] h-[72px] border-2 border-[#a2a2a2] shadow-[inset_2px_2px_0_#fff,2px_2px_0_#fff]">
                        <p class="-mt-[13px] ml-[12px] w-[75px] pl-[3px] bg-[#f0eff1] text-[23px] leading-[26px] tracking-[0.2px]">Status</p>
                    </div>
                    <div class="mt-[21px] pl-[330px] flex text-[22.5px] leading-[26px] tracking-[-0.3px]">
                        <button class="w-[160px] h-[49px] pb-[2px] pr-[5px] border-2 border-t-white border-l-white border-r-[#696969] border-b-[#696969] shadow-[inset_-2px_-2px_0_#a0a0a0,inset_1px_1px_0_#e3e3e3]">OK</button>
                        <button class="ml-[13px] w-[160px] h-[49px] pb-px pr-px border-2 border-b-[3px] border-r-[3px] border-[#646464] shadow-[inset_-2px_-2px_0_#8c8c8c,inset_2px_2px_0_#fff]">Apply</button>
                        <button class="ml-[15px] w-[160px] h-[49px] pb-[2px] pr-[6px] border-2 border-t-white border-l-white border-r-[#696969] border-b-[#696969] shadow-[inset_-2px_-2px_0_#a0a0a0,inset_1px_1px_0_#e3e3e3]">Close</button>
                    </div>
                </div>
            </div>
        </div>
    </div>

    <script>
        // Empty rows of the current table
        const rows = document.getElementById("rows");
        for (let i = 0; i < 7; i++) {
            const row = document.createElement("div");
            row.className = "grid grid-cols-[184px_247px_184px] h-[32px]";
            for (let j = 0; j < 3; j++) {
                const cell = document.createElement("div");
                cell.className = "border-r-2 border-b-2 border-dotted border-[#666]";
                row.appendChild(cell);
            }
            rows.appendChild(row);
        }
    </script>

</body>
</html>
